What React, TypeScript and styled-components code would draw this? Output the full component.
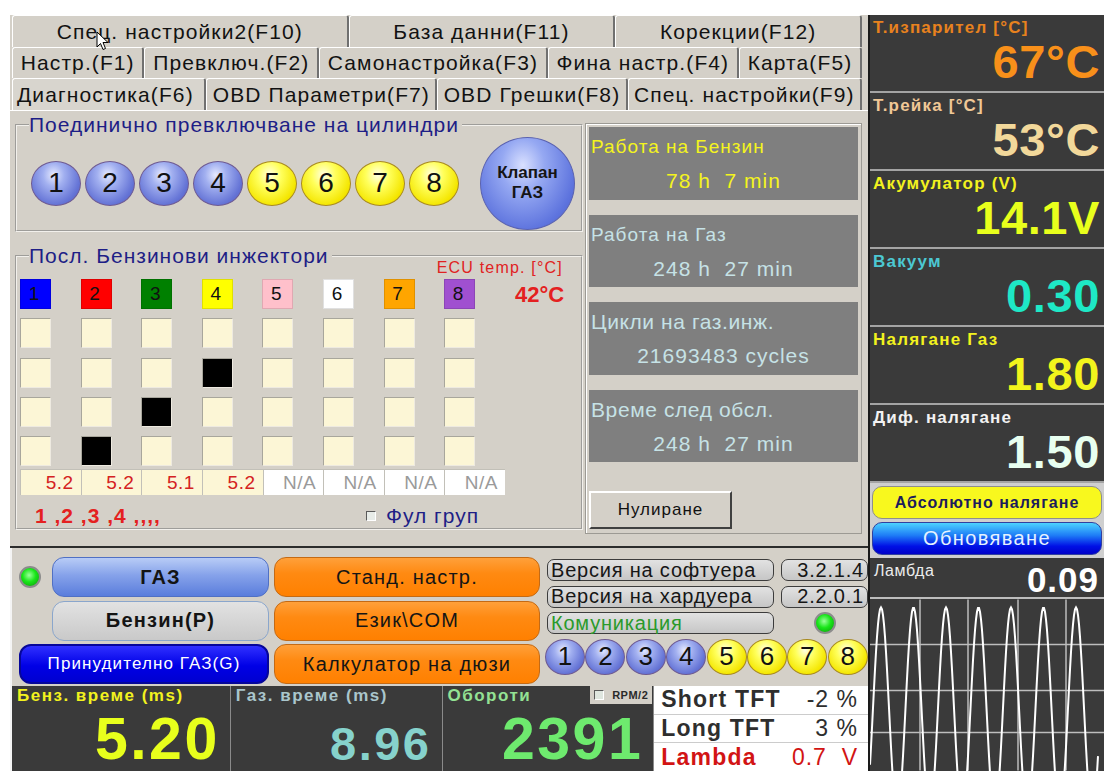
import React from "react";
import styled, { createGlobalStyle, css } from "styled-components";

const GlobalStyle = createGlobalStyle`
  html, body {
    margin: 0;
    padding: 0;
    background: #ffffff;
  }
  body {
    font-family: "Liberation Sans", Arial, sans-serif;
  }
  *, *::before, *::after {
    box-sizing: border-box;
  }
`;

const FACE = "#d4d0c8";
const PANEL = "#3a3a3a";

const Screen = styled.div`
  position: relative;
  width: 1104px;
  height: 771px;
  padding: 15px 0 0 10px;
  display: flex;
  overflow: hidden;
  background: #ffffff;
`;

const Workspace = styled.div`
  width: 858px;
  height: 756px;
  display: flex;
  flex-direction: column;
  background: ${FACE};
`;

/* ---------- tabs ---------- */

const TabStrip = styled.div`
  display: flex;
  flex-direction: column;
  padding: 0 6px 0 2px;
`;

const TabRow = styled.div<{ $h: number }>`
  display: flex;
  height: ${(p) => p.$h}px;
`;

const Tab = styled.div<{ $active?: boolean }>`
  flex: 1 1 auto;
  min-width: 0;
  display: flex;
  align-items: center;
  justify-content: center;
  white-space: nowrap;
  font-size: 21px;
  letter-spacing: 1.1px;
  color: #121212;
  background: ${FACE};
  border-top: 1px solid #ffffff;
  border-left: 1px solid #ffffff;
  border-right: 2px solid #707070;
  border-radius: 3px 3px 0 0;
  ${(p) =>
    p.$active &&
    css`
      justify-content: flex-start;
      padding-left: 4px;
      background: #d8d5ce;
    `}
`;

/* ---------- diagnostics page ---------- */

const TabBody = styled.div`
  height: 430px;
  display: flex;
  gap: 2px;
  padding: 0 6px 0 5px;
  border-top: 1px solid #ffffff;
`;

const LeftColumn = styled.div`
  width: 568px;
  display: flex;
  flex-direction: column;
  padding-top: 3px;
`;

const GroupBox = styled.fieldset<{ $h: number; $gap?: number }>`
  margin: ${(p) => p.$gap || 0}px 0 0;
  height: ${(p) => p.$h}px;
  padding: 0 0 0 3px;
  border: 2px groove #f2f0ec;
  min-width: 0;
`;

const GroupTitle = styled.legend`
  margin-left: 9px;
  padding: 0 3px 0 0;
  font-size: 21px;
  line-height: 22px;
  letter-spacing: 1px;
  color: #1e1e86;
`;

const BallRow = styled.div`
  height: 94px;
  display: flex;
  align-items: center;
  gap: 4px;
  padding-left: 11px;
`;

const Ball = styled.div<{ $tone: "blue" | "yellow"; $w: number; $h: number; $fs: number }>`
  flex: none;
  width: ${(p) => p.$w}px;
  height: ${(p) => p.$h}px;
  border-radius: 50%;
  display: flex;
  align-items: center;
  justify-content: center;
  font-size: ${(p) => p.$fs}px;
  color: #111;
  ${(p) =>
    p.$tone === "blue"
      ? css`
          background: radial-gradient(ellipse at 45% 30%, #e6eaff 0%, #a2b0f0 28%, #6574d6 70%, #4d58bb 100%);
          border: 1px solid #6e5a92;
        `
      : css`
          background: radial-gradient(ellipse at 45% 30%, #ffffe6 0%, #ffff5a 32%, #f4e600 72%, #d9b800 100%);
          border: 1px solid #a88a20;
        `}
`;

const ValveBall = styled.div`
  flex: none;
  margin-left: 17px;
  width: 95px;
  height: 93px;
  border-radius: 50%;
  display: flex;
  flex-direction: column;
  align-items: center;
  justify-content: center;
  font-size: 17px;
  font-weight: bold;
  line-height: 20px;
  color: #151515;
  background: radial-gradient(ellipse at 45% 30%, #d9e0ff 0%, #95a8f2 30%, #5e74de 72%, #4658c4 100%);
  border: 1px solid #5a62b0;
`;

const InjectorArea = styled.div`
  display: flex;
  flex-direction: column;
`;

const EcuCaption = styled.div`
  align-self: flex-end;
  margin: -9px 18px 1px 0;
  font-size: 16px;
  line-height: 20px;
  letter-spacing: 1.2px;
  color: #e02222;
`;

const InjectorMain = styled.div`
  display: flex;
  align-items: flex-start;
`;

const InjectorColumn = styled.div`
  width: 485px;
  display: flex;
  flex-direction: column;
`;

const InjectorGrid = styled.div`
  display: grid;
  grid-template-columns: repeat(8, 31px);
  grid-auto-rows: 30px;
  column-gap: 29.6px;
  row-gap: 9.3px;
`;

const InjectorHead = styled.div<{ $fill: string }>`
  display: flex;
  align-items: center;
  justify-content: center;
  padding-right: 3px;
  font-size: 19px;
  color: #111;
  background: ${(p) => p.$fill};
  border: 1px solid rgba(0, 0, 0, 0.12);
`;

const InjectorCell = styled.div<{ $on?: boolean }>`
  background: ${(p) => (p.$on ? "#000000" : "#fcf6d6")};
  border-top: 1px solid #a8a69c;
  border-left: 1px solid #a8a69c;
  border-right: 1px solid #eeeae0;
  border-bottom: 1px solid #eeeae0;
`;

const ValueStrip = styled.div`
  margin-top: 3px;
  display: grid;
  grid-template-columns: repeat(8, 1fr);
  height: 26px;
`;

const ValueCell = styled.div<{ $na?: boolean }>`
  display: flex;
  align-items: center;
  justify-content: flex-end;
  padding-right: 7px;
  font-size: 19px;
  letter-spacing: 0.5px;
  background: ${(p) => (p.$na ? "#ffffff" : "#fcf6d6")};
  color: ${(p) => (p.$na ? "#9a9a9a" : "#d42222")};
  border-left: 1px solid #c2c0b8;
  border-top: 1px solid #c2c0b8;
`;

const EcuValue = styled.div`
  margin: 3px 0 0 10px;
  font-size: 22px;
  font-weight: bold;
  color: #e42020;
`;

const InjectorFooter = styled.div`
  margin-top: 9px;
  display: flex;
  align-items: center;
  height: 24px;
`;

const Sequence = styled.div`
  width: 346px;
  padding-left: 15px;
  font-size: 21px;
  font-weight: bold;
  letter-spacing: 1px;
  color: #e42020;
`;

const CheckBox = styled.span<{ $light?: boolean }>`
  display: inline-block;
  width: 10px;
  height: 10px;
  border-top: 1px solid #5a5a5a;
  border-left: 1px solid #5a5a5a;
  border-right: 1px solid #ffffff;
  border-bottom: 1px solid #ffffff;
  background: ${(p) => (p.$light ? "#e8ece8" : "#dfe6df")};
`;

const FullGroup = styled.label`
  display: flex;
  align-items: center;
  gap: 10px;
  font-size: 21px;
  letter-spacing: 1px;
  color: #1e1e86;
`;

const StatsColumn = styled.div`
  margin-top: 12px;
  width: 277px;
  height: 411px;
  padding: 3px;
  display: flex;
  flex-direction: column;
  gap: 15px;
  border: 1px solid #9c9a94;
  box-shadow: inset 1px 1px 0 #ffffff;
`;

const StatCard = styled.div`
  height: 72.5px;
  padding: 9px 2px 0;
  background: #7f7f7f;
  display: flex;
  flex-direction: column;
`;

const StatLabel = styled.div<{ $ink: string; $big?: boolean }>`
  font-size: ${(p) => (p.$big ? 21 : 19)}px;
  line-height: 22px;
  letter-spacing: ${(p) => (p.$big ? 0.6 : 1)}px;
  color: ${(p) => p.$ink};
  white-space: nowrap;
`;

const StatValue = styled.div<{ $ink: string }>`
  margin-top: 11px;
  text-align: center;
  font-size: 21px;
  letter-spacing: 1px;
  color: ${(p) => p.$ink};
  white-space: pre;
`;

const ResetButton = styled.button`
  margin-top: 14px;
  width: 143px;
  height: 38px;
  font-family: inherit;
  font-size: 17px;
  letter-spacing: 1px;
  color: #111;
  background: ${FACE};
  border-top: 2px solid #ffffff;
  border-left: 2px solid #ffffff;
  border-right: 2px solid #404040;
  border-bottom: 2px solid #404040;
`;

/* ---------- control deck ---------- */

const Divider = styled.div`
  height: 8px;
  border-bottom: 2px solid #2c2c2c;
`;

const ControlDeck = styled.div`
  height: 138px;
  display: flex;
  padding: 9px 0 0 7px;
  border-left: 2px solid #f4f4f4;
`;

const ButtonGrid = styled.div`
  display: grid;
  grid-template-columns: 28px 217px 266px;
  grid-template-rows: repeat(3, 40px);
  column-gap: 5px;
  row-gap: 3.5px;
`;

const Led = styled.span<{ $size: number; $start?: boolean }>`
  align-self: center;
  justify-self: ${(p) => (p.$start ? "start" : "center")};
  width: ${(p) => p.$size}px;
  height: ${(p) => p.$size}px;
  border-radius: 50%;
  background: radial-gradient(circle at 45% 40%, #9cff9c 0%, #19e619 45%, #0a960a 100%);
  border: 2px solid #8c8c8c;
`;

type PillKind = "gas" | "petrol" | "force" | "orange";

const Pill = styled.div<{ $kind: PillKind; $span?: boolean }>`
  display: flex;
  align-items: center;
  justify-content: center;
  border-radius: 12px;
  white-space: nowrap;
  letter-spacing: 1.2px;
  ${(p) => p.$span && "grid-column: 1 / 3;"}
  ${(p) =>
    p.$kind === "gas"
      ? css`
          background: linear-gradient(#b8ccf6, #86a2ea 45%, #5a7ddc);
          border: 1px solid #5070c4;
          font-size: 20px;
          font-weight: bold;
          color: #141414;
        `
      : p.$kind === "petrol"
      ? css`
          background: linear-gradient(#e2e2e2, #c9c9c9);
          border: 1px solid #8aa6cc;
          font-size: 20px;
          font-weight: bold;
          color: #141414;
        `
      : p.$kind === "force"
      ? css`
          background: linear-gradient(#3030ff, #0000e6 55%, #0000d0);
          border: 2px solid #06069a;
          font-size: 17px;
          letter-spacing: 1.1px;
          color: #ffffff;
        `
      : css`
          background: linear-gradient(#ffa03a, #ff8a12 40%, #ff8000);
          border: 1px solid #c46a14;
          font-size: 20px;
          color: #151515;
        `}
`;

const VersionGrid = styled.div`
  margin-left: 7px;
  padding-top: 2px;
  display: grid;
  grid-template-columns: 227px 87px;
  grid-template-rows: 22px 22px 22px 36px;
  column-gap: 7px;
  row-gap: 4.5px;
`;

const InfoBox = styled.div<{ $ink?: string; $right?: boolean }>`
  display: flex;
  align-items: center;
  justify-content: ${(p) => (p.$right ? "flex-end" : "flex-start")};
  padding: 0 3px;
  font-size: 20px;
  letter-spacing: 0.8px;
  white-space: nowrap;
  color: ${(p) => p.$ink || "#161616"};
  background: linear-gradient(#e2e2e2, #c6c6c6);
  border: 1px solid #3c3c3c;
  border-radius: 7px;
`;

const SmallBalls = styled.div`
  grid-column: 1 / 3;
  margin-left: -2px;
  display: flex;
  gap: 0.4px;
`;

/* ---------- gauges ---------- */

const GaugeRow = styled.div`
  height: 85px;
  display: flex;
  gap: 1px;
  background: #8a8a8a;
  border-left: 2px solid #f4f4f4;
`;

const Gauge = styled.div<{ $w: number }>`
  width: ${(p) => p.$w}px;
  display: flex;
  flex-direction: column;
  justify-content: space-between;
  background: ${PANEL};
  overflow: hidden;
`;

const GaugeHead = styled.div`
  display: flex;
  justify-content: space-between;
  align-items: flex-start;
  padding: 0 1px 0 5px;
`;

const GaugeLabel = styled.div<{ $ink: string }>`
  font-size: 17px;
  line-height: 19px;
  font-weight: bold;
  letter-spacing: 1.5px;
  color: ${(p) => p.$ink};
`;

const GaugeValue = styled.div<{ $ink: string; $size: number }>`
  padding-right: 10px;
  text-align: right;
  font-size: ${(p) => p.$size}px;
  line-height: normal;
  font-weight: bold;
  letter-spacing: 2.5px;
  color: ${(p) => p.$ink};
`;

const RpmToggle = styled.div`
  display: flex;
  align-items: center;
  gap: 8px;
  height: 18px;
  padding: 0 4px;
  font-size: 11px;
  font-weight: bold;
  letter-spacing: 0.5px;
  color: #2a2a2a;
  background: ${FACE};
`;

const TrimTable = styled.div`
  width: 214px;
  display: flex;
  flex-direction: column;
  background: #ffffff;
`;

const TrimRow = styled.div<{ $ink: string }>`
  flex: 1;
  display: flex;
  align-items: center;
  justify-content: space-between;
  padding: 0 10px 0 7px;
  color: ${(p) => p.$ink};
  border-bottom: 1px solid #cccccc;
  &:last-child {
    border-bottom: none;
  }
`;

const TrimName = styled.span`
  font-size: 23px;
  font-weight: bold;
  letter-spacing: 1.2px;
`;

const TrimValue = styled.span`
  font-size: 23px;
  letter-spacing: 1px;
  white-space: pre;
`;

/* ---------- sensor column ---------- */

const SidePanel = styled.div`
  width: 236px;
  display: flex;
  flex-direction: column;
  background: ${PANEL};
  border-left: 2px solid #1a1a1a;
`;

const SensorCard = styled.div`
  height: 78px;
  display: flex;
  flex-direction: column;
  padding: 3px 4px 0 3px;
  border-bottom: 2px solid #a4a4a4;
`;

const SensorLabel = styled.div<{ $ink: string }>`
  font-size: 17px;
  font-weight: bold;
  letter-spacing: 1.2px;
  line-height: 19px;
  color: ${(p) => p.$ink};
`;

const SensorValue = styled.div<{ $ink: string }>`
  margin-top: auto;
  padding-bottom: 6px;
  text-align: right;
  font-size: 47px;
  line-height: 47px;
  letter-spacing: 0.6px;
  font-weight: bold;
  white-space: nowrap;
  color: ${(p) => p.$ink};
`;

const SideButtons = styled.div`
  height: 75px;
  display: flex;
  flex-direction: column;
  gap: 3px;
  padding: 3px 2px;
  background: #cfcfcf;
`;

const SideButton = styled.div<{ $kind: "yellow" | "blue" }>`
  flex: 1;
  display: flex;
  align-items: center;
  justify-content: center;
  border-radius: 10px;
  ${(p) =>
    p.$kind === "yellow"
      ? css`
          background: #f8f81e;
          border: 1px solid #8e8e8e;
          font-size: 16px;
          font-weight: bold;
          letter-spacing: 1px;
          color: #1c1c5c;
        `
      : css`
          background: linear-gradient(#4cd2ff, #1e7cf6 40%, #0010e6 75%, #0000c8);
          border: 1px solid #3040a0;
          font-size: 20px;
          letter-spacing: 1.4px;
          color: #e6f2ff;
        `}
`;

const LambdaHead = styled.div`
  height: 41px;
  display: flex;
  justify-content: space-between;
  align-items: flex-start;
  padding: 4px 5px 0 4px;
  border-bottom: 2px solid #bdbdbd;
`;

const LambdaLabel = styled.div`
  font-size: 16px;
  letter-spacing: 0.6px;
  color: #ececec;
`;

const LambdaValue = styled.div`
  font-size: 35px;
  line-height: 36px;
  font-weight: bold;
  letter-spacing: 1px;
  color: #ffffff;
`;

const Chart = styled.svg`
  display: block;
  flex: 1;
`;

const Pointer = styled.svg`
  position: absolute;
  left: 96px;
  top: 31px;
`;

const sensors = [
  { label: "Т.изпарител [°C]", value: "67°C", labelInk: "#e8821e", ink: "#f8901a" },
  { label: "Т.рейка [°C]", value: "53°C", labelInk: "#f0c896", ink: "#f2d89a" },
  { label: "Акумулатор (V)", value: "14.1V", labelInk: "#f2f21e", ink: "#e8ff1c" },
  { label: "Вакуум", value: "0.30", labelInk: "#4cc8d2", ink: "#1ee8c6" },
  { label: "Налягане Газ", value: "1.80", labelInk: "#f2f21e", ink: "#f2f41c" },
  { label: "Диф. налягане", value: "1.50", labelInk: "#f2f2f2", ink: "#e8fff0" },
];

const injectorHeads = ["#0000ff", "#ff0000", "#008000", "#ffff00", "#ffc0cb", "#ffffff", "#ffa500", "#a050d0"];
// black cells: row index -> column index
const activeCells: Record<number, number> = { 1: 3, 2: 2, 3: 1 };
const pulseTimes = ["5.2", "5.2", "5.1", "5.2", "N/A", "N/A", "N/A", "N/A"];

const stats = [
  { label: "Работа на Бензин", value: "78 h  7 min", ink: "#f4f41e", big: false },
  { label: "Работа на Газ", value: "248 h  27 min", ink: "#c6e2e6", big: false },
  { label: "Цикли на газ.инж.", value: "21693483 cycles", ink: "#c6e2e6", big: true },
  { label: "Време след обсл.", value: "248 h  27 min", ink: "#c6e2e6", big: true },
];

const wave = Array.from({ length: 229 }, (_, x) => {
  const y = 111 - 103 * Math.cos((2 * Math.PI * (x - 11)) / 32.5);
  return `${x},${y.toFixed(1)}`;
}).join(" ");

function Cylinders({ w, h, fs }: { w: number; h: number; fs: number }) {
  return (
    <>
      {[1, 2, 3, 4, 5, 6, 7, 8].map((n) => (
        <Ball key={n} $tone={n <= 4 ? "blue" : "yellow"} $w={w} $h={h} $fs={fs}>
          {n}
        </Ball>
      ))}
    </>
  );
}

export default function App() {
  return (
    <Screen>
      <GlobalStyle />
      <Workspace>
        <TabStrip>
          <TabRow $h={32}>
            <Tab>Спец. настройки2(F10)</Tab>
            <Tab>База данни(F11)</Tab>
            <Tab>Корекции(F12)</Tab>
          </TabRow>
          <TabRow $h={31}>
            <Tab>Настр.(F1)</Tab>
            <Tab>Превключ.(F2)</Tab>
            <Tab>Самонастройка(F3)</Tab>
            <Tab>Фина настр.(F4)</Tab>
            <Tab>Карта(F5)</Tab>
          </TabRow>
          <TabRow $h={32}>
            <Tab $active>Диагностика(F6)</Tab>
            <Tab>OBD Параметри(F7)</Tab>
            <Tab>OBD Грешки(F8)</Tab>
            <Tab>Спец. настройки(F9)</Tab>
          </TabRow>
        </TabStrip>

        <TabBody>
          <LeftColumn>
            <GroupBox $h={118}>
              <GroupTitle>Поединично превключване на цилиндри</GroupTitle>
              <BallRow>
                <Cylinders w={50} h={45} fs={28} />
                <ValveBall>
                  <span>Клапан</span>
                  <span>ГАЗ</span>
                </ValveBall>
              </BallRow>
            </GroupBox>

            <GroupBox $h={285} $gap={13}>
              <GroupTitle>Посл. Бензинови инжектори</GroupTitle>
              <InjectorArea>
                <EcuCaption>ECU temp. [°C]</EcuCaption>
                <InjectorMain>
                  <InjectorColumn>
                    <InjectorGrid>
                      {injectorHeads.map((fill, i) => (
                        <InjectorHead key={fill} $fill={fill}>
                          {i + 1}
                        </InjectorHead>
                      ))}
                      {[0, 1, 2, 3].map((row) =>
                        injectorHeads.map((_, col) => (
                          <InjectorCell key={`${row}-${col}`} $on={activeCells[row] === col} />
                        ))
                      )}
                    </InjectorGrid>
                    <ValueStrip>
                      {pulseTimes.map((t, i) => (
                        <ValueCell key={i} $na={t === "N/A"}>
                          {t}
                        </ValueCell>
                      ))}
                    </ValueStrip>
                  </InjectorColumn>
                  <EcuValue>42°C</EcuValue>
                </InjectorMain>
                <InjectorFooter>
                  <Sequence>1 ,2 ,3 ,4 ,,,,</Sequence>
                  <FullGroup>
                    <CheckBox $light />
                    Фул груп
                  </FullGroup>
                </InjectorFooter>
              </InjectorArea>
            </GroupBox>
          </LeftColumn>

          <StatsColumn>
            {stats.map((s) => (
              <StatCard key={s.label}>
                <StatLabel $ink={s.ink} $big={s.big}>
                  {s.label}
                </StatLabel>
                <StatValue $ink={s.ink}>{s.value}</StatValue>
              </StatCard>
            ))}
            <ResetButton>Нулиране</ResetButton>
          </StatsColumn>
        </TabBody>

        <Divider />

        <ControlDeck>
          <ButtonGrid>
            <Led $size={22} $start />
            <Pill $kind="gas">ГАЗ</Pill>
            <Pill $kind="orange">Станд. настр.</Pill>
            <span />
            <Pill $kind="petrol">Бензин(P)</Pill>
            <Pill $kind="orange">Език\COM</Pill>
            <Pill $kind="force" $span>
              Принудително ГАЗ(G)
            </Pill>
            <Pill $kind="orange">Калкулатор на дюзи</Pill>
          </ButtonGrid>

          <VersionGrid>
            <InfoBox>Версия на софтуера</InfoBox>
            <InfoBox $right>3.2.1.4</InfoBox>
            <InfoBox>Версия на хардуера</InfoBox>
            <InfoBox $right>2.2.0.1</InfoBox>
            <InfoBox $ink="#2a9a2a">Комуникация</InfoBox>
            <Led $size={22} />
            <SmallBalls>
              <Cylinders w={40} h={36} fs={26} />
            </SmallBalls>
          </VersionGrid>
        </ControlDeck>

        <GaugeRow>
          <Gauge $w={218}>
            <GaugeHead>
              <GaugeLabel $ink="#f2f21e">Бенз. време (ms)</GaugeLabel>
            </GaugeHead>
            <GaugeValue $ink="#e8ff1c" $size={59}>
              5.20
            </GaugeValue>
          </Gauge>
          <Gauge $w={211}>
            <GaugeHead>
              <GaugeLabel $ink="#aac6cc">Газ. време (ms)</GaugeLabel>
            </GaugeHead>
            <GaugeValue $ink="#86d2cc" $size={47}>
              8.96
            </GaugeValue>
          </Gauge>
          <Gauge $w={211}>
            <GaugeHead>
              <GaugeLabel $ink="#94e294">Обороти</GaugeLabel>
              <RpmToggle>
                <CheckBox />
                RPM/2
              </RpmToggle>
            </GaugeHead>
            <GaugeValue $ink="#6eea6e" $size={59}>
              2391
            </GaugeValue>
          </Gauge>
          <TrimTable>
            <TrimRow $ink="#2e2e2e">
              <TrimName>Short TFT</TrimName>
              <TrimValue>-2 %</TrimValue>
            </TrimRow>
            <TrimRow $ink="#2e2e2e">
              <TrimName>Long TFT</TrimName>
              <TrimValue>3 %</TrimValue>
            </TrimRow>
            <TrimRow $ink="#d21414">
              <TrimName>Lambda</TrimName>
              <TrimValue>0.7  V</TrimValue>
            </TrimRow>
          </TrimTable>
        </GaugeRow>
      </Workspace>

      <SidePanel>
        {sensors.map((s) => (
          <SensorCard key={s.label}>
            <SensorLabel $ink={s.labelInk}>{s.label}</SensorLabel>
            <SensorValue $ink={s.ink}>{s.value}</SensorValue>
          </SensorCard>
        ))}
        <SideButtons>
          <SideButton $kind="yellow">Абсолютно налягане</SideButton>
          <SideButton $kind="blue">Обновяване</SideButton>
        </SideButtons>
        <LambdaHead>
          <LambdaLabel>Ламбда</LambdaLabel>
          <LambdaValue>0.09</LambdaValue>
        </LambdaHead>
        <Chart viewBox="0 0 234 171" width={234} height={171}>
          <g stroke="#bdbdbd" strokeWidth={1.5}>
            <line x1={50} y1={0} x2={50} y2={171} />
            <line x1={98} y1={0} x2={98} y2={171} />
            <line x1={148} y1={0} x2={148} y2={171} />
            <line x1={196} y1={0} x2={196} y2={171} />
            <line x1={0} y1={45} x2={234} y2={45} />
            <line x1={0} y1={91} x2={234} y2={91} />
            <line x1={0} y1={133} x2={234} y2={133} />
          </g>
          <polyline points={wave} fill="none" stroke="#ffffff" strokeWidth={2} />
        </Chart>
      </SidePanel>

      <Pointer width={14} height={20} viewBox="0 0 14 20">
        <path d="M1 1 L1 16 L4.5 12.5 L7 18.5 L9.5 17.5 L7 11.5 L12 11.5 Z" fill="#ffffff" stroke="#000000" strokeWidth={1} />
      </Pointer>
    </Screen>
  );
}
